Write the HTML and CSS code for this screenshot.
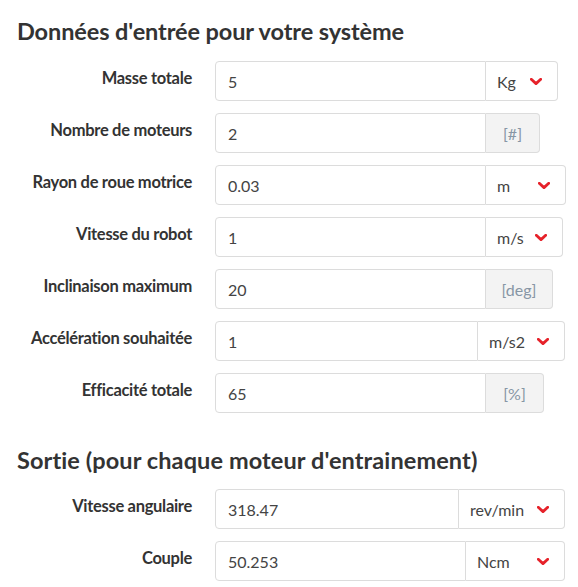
FILE: index.html
```html
<!DOCTYPE html>
<html lang="fr">
<head>
<meta charset="utf-8">
<title>Calculateur moteur</title>
<link rel="stylesheet" href="styles.css">
</head>
<body>
<div class="page">
  <h2 class="title">Données d'entrée pour votre système</h2>
  <div class="rows">
    <div class="row">
      <label class="label">Masse totale</label>
      <div class="group">
        <input class="field w271" value="5">
        <div class="select s72"><span>Kg</span><svg class="chev" viewBox="0 0 12 7"><path d="M1.3 1.3 L6 5.6 L10.7 1.3"/></svg></div>
      </div>
    </div>
    <div class="row">
      <label class="label">Nombre de moteurs</label>
      <div class="group">
        <input class="field w271" value="2">
        <div class="addon a54">[#]</div>
      </div>
    </div>
    <div class="row">
      <label class="label">Rayon de roue motrice</label>
      <div class="group">
        <input class="field w271" value="0.03">
        <div class="select s80"><span>m</span><svg class="chev" viewBox="0 0 12 7"><path d="M1.3 1.3 L6 5.6 L10.7 1.3"/></svg></div>
      </div>
    </div>
    <div class="row">
      <label class="label">Vitesse du robot</label>
      <div class="group">
        <input class="field w271" value="1">
        <div class="select s77"><span>m/s</span><svg class="chev" viewBox="0 0 12 7"><path d="M1.3 1.3 L6 5.6 L10.7 1.3"/></svg></div>
      </div>
    </div>
    <div class="row">
      <label class="label">Inclinaison maximum</label>
      <div class="group">
        <input class="field w271" value="20">
        <div class="addon a67">[deg]</div>
      </div>
    </div>
    <div class="row">
      <label class="label">Accélération souhaitée</label>
      <div class="group">
        <input class="field w263" value="1">
        <div class="select s87"><span>m/s2</span><svg class="chev" viewBox="0 0 12 7"><path d="M1.3 1.3 L6 5.6 L10.7 1.3"/></svg></div>
      </div>
    </div>
    <div class="row">
      <label class="label">Efficacité totale</label>
      <div class="group">
        <input class="field w271" value="65">
        <div class="addon a58">[%]</div>
      </div>
    </div>
  </div>

  <h2 class="title title-out">Sortie (pour chaque moteur d'entrainement)</h2>
  <div class="rows rows-out">
    <div class="row">
      <label class="label">Vitesse angulaire</label>
      <div class="group">
        <input class="field w244" value="318.47">
        <div class="select s106"><span>rev/min</span><svg class="chev" viewBox="0 0 12 7"><path d="M1.3 1.3 L6 5.6 L10.7 1.3"/></svg></div>
      </div>
    </div>
    <div class="row">
      <label class="label">Couple</label>
      <div class="group">
        <input class="field w251" value="50.253">
        <div class="select s99"><span>Ncm</span><svg class="chev" viewBox="0 0 12 7"><path d="M1.3 1.3 L6 5.6 L10.7 1.3"/></svg></div>
      </div>
    </div>
  </div>
</div>
</body>
</html>
```

FILE: styles.css
```css
* { box-sizing: border-box; }
html, body { margin: 0; padding: 0; background: #fff; }
body {
  font-family: Lato, "Open Sans", sans-serif;
  color: #333;
}
.page {
  padding: 14px 0 0 17px;
}
.title {
  margin: 0;
  font-size: 23.5px;
  letter-spacing: -0.1px;
  line-height: 34px;
  font-weight: 700;
  color: #333;
}
.title-out {
  margin-top: 30px;
  letter-spacing: 0.1px;
}
.rows {
  display: flex;
  flex-direction: column;
  gap: 12px;
  margin-top: 13px;
}
.rows-out {
  margin-top: 12px;
}
.row {
  display: grid;
  grid-template-columns: 175px auto;
  column-gap: 23px;
  align-items: start;
}
.label {
  text-align: right;
  font-size: 16.5px;
  letter-spacing: -0.3px;
  font-weight: 700;
  line-height: 20px;
  padding-top: 7px;
  color: #333;
}
.group {
  display: flex;
  height: 40px;
}
.field {
  height: 40px;
  border: 1px solid #dcdcdc;
  border-radius: 4px 0 0 4px;
  padding: 0 12px;
  font-family: Lato, "Open Sans", sans-serif;
  font-size: 16px;
  color: #444;
  background: #fff;
  outline: none;
}
.w271 { width: 271px; }
.w263 { width: 263px; }
.w244 { width: 244px; }
.w251 { width: 251px; }
.select, .addon {
  height: 40px;
  border: 1px solid #dcdcdc;
  border-left: none;
  border-radius: 0 4px 4px 0;
  display: flex;
  align-items: center;
  font-size: 16px;
}
.select {
  justify-content: space-between;
  padding: 0 15px 0 11px;
  background: #fff;
  color: #444;
}
.addon {
  justify-content: center;
  background: #f3f3f3;
  color: #8796a5;
}
.chev {
  width: 12px;
  height: 7px;
  fill: none;
  stroke: #e6222a;
  stroke-width: 2.8;
  stroke-linecap: round;
  stroke-linejoin: round;
}
.s72 { width: 72px; }
.s80 { width: 80px; }
.s77 { width: 77px; }
.s87 { width: 87px; }
.s106 { width: 106px; }
.s99 { width: 99px; }
.a54 { width: 54px; }
.a67 { width: 67px; }
.a58 { width: 58px; }
```
